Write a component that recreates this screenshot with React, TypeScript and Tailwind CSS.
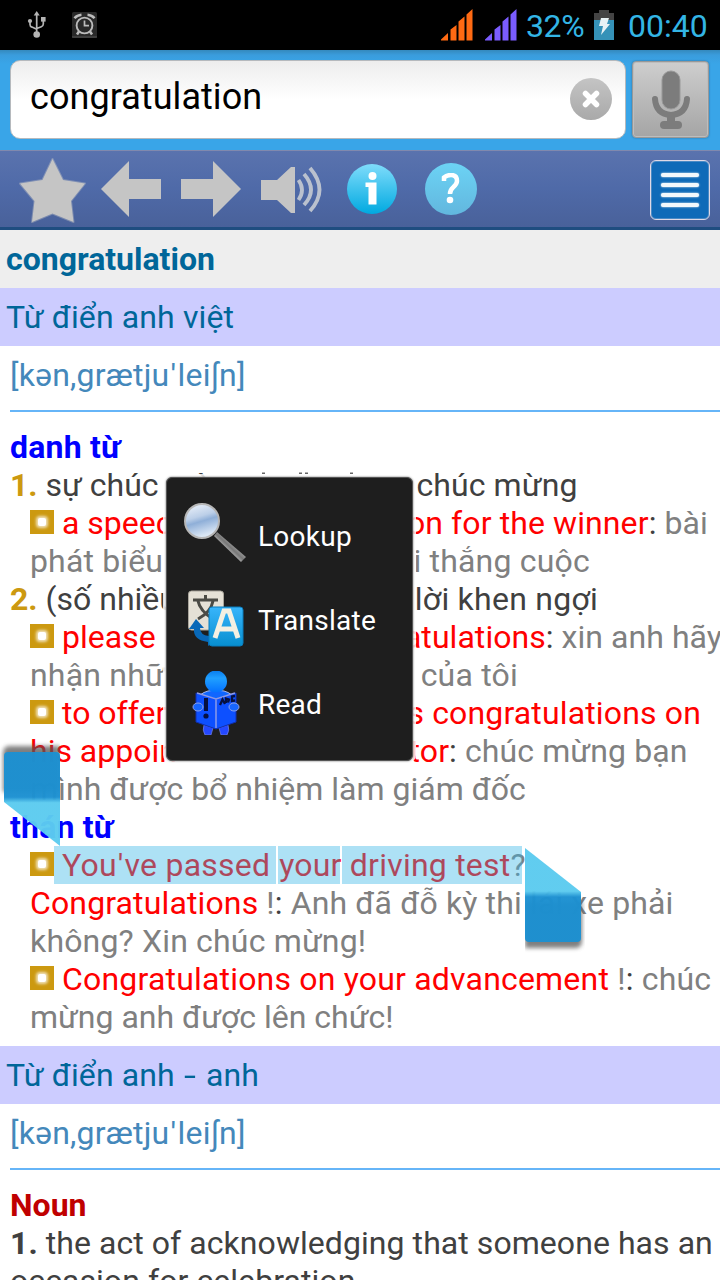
import React from "react";

const K = "text-[#404040]";
const R = "text-[#ff0000]";
const G = "text-[#808080]";

function Line({ className = "", children }: { className?: string; children: React.ReactNode }) {
  return <div className={`h-[38px] whitespace-nowrap leading-[38px] ${className}`}>{children}</div>;
}

function Bullet() {
  return (
    <span className="mr-[8px] mt-[6px] inline-flex h-6 w-6 items-center justify-center bg-[#cc9910] align-top">
      <span className="h-[8px] w-[8px] rounded-[2px] bg-white shadow-[0_0_3px_2px_rgba(255,255,255,0.7)]" />
    </span>
  );
}

function StatusBar() {
  return (
    <div className="flex h-[50px] items-center bg-black text-[32px] text-[#33b5e5]">
      <svg className="ml-[27px] h-[28px] w-[20px]" viewBox="0 0 20 28" fill="none" stroke="#b4b4b4" strokeWidth="1.7">
        <path d="M9.7 3v20M3 10v3.500q0 2 2 2.600l4.700 2.200M16.300 8v5q0 2-2 2.700l-4.600 1.800" />
        <path d="M9.700 0l3 4.500h-6z" fill="#b4b4b4" stroke="none" />
        <circle cx="9.700" cy="23.500" r="3.300" fill="#b4b4b4" stroke="none" />
        <circle cx="3" cy="10" r="2.100" fill="#b4b4b4" stroke="none" />
        <rect x="14" y="6" width="4.600" height="4.600" fill="#b4b4b4" stroke="none" />
      </svg>
      <svg className="ml-[25px] h-[26px] w-[25px]" viewBox="0 0 25 26" fill="none" stroke="#bcbcbc" strokeWidth="1.900">
        <rect x="0" y="0" width="25" height="26" rx="1.500" fill="#292929" stroke="none" />
        <path d="M0 25h25" stroke="#555" strokeWidth="1" />
        <circle cx="12.500" cy="13.500" r="7.900" />
        <path d="M12.500 8.500v5.200h4.500" strokeWidth="1.700" />
        <path d="M2.500 6.200Q5 3 9.500 2.700M22.500 6.200Q20 3 15.500 2.700" strokeWidth="2.500" />
        <path d="M7 19.500l-2 3M18 19.500l2 3" strokeWidth="2.500" />
      </svg>
      <div className="flex-1" />
      <svg className="h-[32px] w-[33px]" viewBox="0 0 33 32" fill="#ff6a13">
        <path d="M-1 31.500L7 24v7.500zM9.500 31.500V20.500l6-4.500v15.500zM17.500 31.500V12.500l6-5v24zM25.500 31.500V5.500l6-5.500v31.500z" />
      </svg>
      <svg className="ml-[11px] h-[32px] w-[33px]" viewBox="0 0 33 32" fill="#7a5cff">
        <path d="M-1 31.500L7 24v7.500zM9.500 31.500V20.500l6-4.500v15.500zM17.500 31.500V12.500l6-5v24zM25.500 31.500V5.500l6-5.500v31.500z" />
      </svg>
      <span className="ml-[8px] w-[60px] whitespace-nowrap pt-[2px] leading-[38px] tracking-[-0.4px]">32%</span>
      <svg className="ml-[8px] h-[32px] w-[20px]" viewBox="0 0 20 32">
        <path d="M0 4h5V1h10v3h5v27H0z" fill="#444" />
        <path d="M0 11h20v20H0z" fill="#3592b8" />
        <path d="M7 9h8l-2 6h3L7 26l2-9H5z" fill="#e8f2f5" />
      </svg>
      <span className="ml-[14px] w-[92px] whitespace-nowrap pt-[2px] leading-[38px]">00:40</span>
    </div>
  );
}

function SearchBar() {
  return (
    <div className="flex h-[100px] items-start bg-[linear-gradient(#3489bd_0px,#3a9cdc_5px,#39a5e8_14px,#39a5e8_100%)] pl-[10px] pt-[10px]">
      <div className="flex h-[79px] w-[616px] items-center rounded-[10px] border border-[#b5b9bd] bg-linear-to-b from-[#ededed] to-white to-50% pl-[19px] pr-[12px] text-[36px] text-black">
        <span className="flex-1 pb-[5px] leading-[42px] tracking-[0.05px]">congratulation</span>
        <svg className="mb-[2px] h-[44px] w-[44px]" viewBox="0 0 44 44">
          <defs>
            <linearGradient id="clear" x2="0" y2="1">
              <stop stopColor="#c4c4c4" />
              <stop offset="1" stopColor="#a9a9a9" />
            </linearGradient>
          </defs>
          <circle cx="22" cy="22" r="21" fill="url(#clear)" />
          <path d="M16.500 16.500l11 11M27.500 16.500l-11 11" stroke="#fff" strokeWidth="5.500" strokeLinecap="round" />
        </svg>
      </div>
      <div className="ml-[6px] mt-[1px] flex h-[77px] w-[77px] items-center justify-center rounded-[4px] border border-[#989898] bg-linear-to-b from-[#cecece] to-[#a5a5a5] shadow-[inset_0_0_0_1px_#bdbdbd,0_0_2px_#2b6c95]">
        <svg className="h-[60px] w-[40px]" viewBox="0 0 40 60">
          <rect x="11" y="1" width="18" height="38" rx="9" fill="#7c7c7c" stroke="#999" />
          <path d="M4 29q1 15 16 16q15-1 16-16" fill="none" stroke="#7c7c7c" strokeWidth="6" strokeLinecap="round" />
          <rect x="16" y="44" width="8" height="10" fill="#7c7c7c" />
          <rect x="9" y="51" width="22" height="8" rx="4" fill="#7c7c7c" />
        </svg>
      </div>
    </div>
  );
}

function Toolbar() {
  return (
    <div className="flex h-[80px] items-start border-b-[3px] border-[#1f4d80] bg-linear-to-b from-[#5a73ae] via-[#4f6aa8] to-[#49619a] shadow-[inset_0_1px_0_#8089ae]">
      <svg className="ml-[18px] mt-[6px] h-[70px] w-[70px]" viewBox="0 0 70 70">
        <path d="M34.500 3L45 24L67 27.500L53 45L55.500 66L34.500 57.500L14 66L16.500 45L2 27.500L24.500 24z" fill="#c5c5c5" stroke="#c5c5c5" strokeOpacity=".4" strokeWidth="2" strokeLinejoin="round" />
      </svg>
      <svg className="ml-[13px] mt-[11px] h-[56px] w-[60px]" viewBox="0 0 60 56">
        <path d="M0 28L28 0v18h32v20H28v18z" fill="#c5c5c5" />
      </svg>
      <svg className="ml-[20px] mt-[11px] h-[56px] w-[60px]" viewBox="0 0 60 56">
        <path d="M60 28L32 0v18H0v20h32v18z" fill="#c5c5c5" />
      </svg>
      <svg className="ml-[20px] mt-[16px] h-[48px] w-[62px]" viewBox="0 0 62 48" fill="none" stroke="#bac1ce" strokeWidth="3.800">
        <path d="M0 14h16L30 1h4v46h-4L16 34H0z" fill="#c5c5c5" stroke="none" />
        <path d="M37.500 14q7 10 0 20M43 8q14 16 0 31M49 2q19 22 0 43" />
      </svg>
      <svg className="ml-[23px] mt-[12px] h-[52px] w-[52px]" viewBox="0 0 52 52">
        <defs>
          <linearGradient id="info" x2="0" y2="1">
            <stop stopColor="#7fdcfb" />
            <stop offset="1" stopColor="#00a9e0" />
          </linearGradient>
        </defs>
        <circle cx="26" cy="27" r="25" fill="url(#info)" />
        <circle cx="26.500" cy="14" r="4" fill="#fff" />
        <path d="M19.500 20.500h11v22h-8V25h-3z" fill="#fff" />
      </svg>
      <div className="ml-[27px] mt-[13px] flex h-[52px] w-[52px] items-center justify-center rounded-full bg-linear-to-b from-[#6cd3f5] to-[#62b7de]">
        <svg className="h-[32px] w-[20px]" viewBox="0 0 20 32">
          <path d="M3 8V4.500q3-2.500 7-2.500q6 0 6 6q0 3-4 6.500q-3 2.500-3 6.500" fill="none" stroke="#fff" strokeWidth="4.500" />
          <circle cx="9" cy="27" r="3.300" fill="#fff" />
        </svg>
      </div>
      <div className="flex-1" />
      <div className="mr-[10px] mt-[10px] flex h-[60px] w-[60px] flex-col items-center justify-center gap-[6px] rounded-[6px] border border-[#dfd9e6] bg-[#0f6ab8] shadow-[inset_0_0_0_1px_#4a8ac5]">
        {[0, 1, 2, 3].map((i) => (
          <div key={i} className="h-[4px] w-[38px] rounded-[2px] bg-[#f4f8fc] shadow-[0_0_2px_#fff]" />
        ))}
      </div>
    </div>
  );
}

function SectionTitle({ children }: { children: React.ReactNode }) {
  return <div className="h-[58px] bg-[#ccccff] pl-[6px] leading-[58px] tracking-[0.12px] text-[#006699]">{children}</div>;
}

function Phonetic() {
  return (
    <div className="pl-[10px]">
      <div className="h-[58px] leading-[58px] tracking-[0.2px] text-[#4488bb]">
        [kən,grætju<span className="px-[1.2px]">&apos;</span>leiʃn]
      </div>
      <div className="mb-[16px] mt-[6px] h-[2px] bg-[#66b5f8]" />
    </div>
  );
}

function MagnifierIcon() {
  return (
    <svg className="mt-[3px] h-[62px] w-[62px]" viewBox="0 0 62 62">
      <defs>
        <linearGradient id="lens" x2=".3" y2="1">
          <stop stopColor="#f2f6fc" />
          <stop offset=".45" stopColor="#bccfe8" />
          <stop offset=".6" stopColor="#8fafd8" />
          <stop offset="1" stopColor="#dbe7f5" />
        </linearGradient>
        <linearGradient id="handle" x1="0" y1="1" x2="1" y2="0">
          <stop offset=".35" stopColor="#ccc" />
          <stop offset=".5" stopColor="#777" />
          <stop offset=".65" stopColor="#aaa" />
        </linearGradient>
      </defs>
      <path d="M30 33l3-4L62 54l-5 5z" fill="url(#handle)" />
      <circle cx="18" cy="18" r="17" fill="url(#lens)" stroke="#b7b7b7" strokeWidth="2" />
    </svg>
  );
}

function TranslateIcon() {
  return (
    <svg className="mt-[4px] h-[60px] w-[62px]" viewBox="0 0 62 60">
      <defs>
        <linearGradient id="tile" x2="0" y2="1">
          <stop stopColor="#38b5fb" />
          <stop offset="1" stopColor="#078fd0" />
        </linearGradient>
      </defs>
      <rect x="4.500" y="3" width="35" height="39" rx="3" fill="#e5e1d6" stroke="#aaa69c" />
      <path d="M9 12h25M21.500 7v5M14 13q2 10 15 18M29 13q-2 11-15 18" fill="none" stroke="#4b4b45" strokeWidth="3" />
      <path d="M5 41l7-10l8 9h-4q0 7 9 8v-4l7 8l-8 6v-4Q9 52 10 41z" fill="#0868b8" />
      <rect x="25" y="19" width="34" height="39" rx="3" fill="url(#tile)" stroke="#087cbd" />
      <path d="M31 50l9-27h5l9 27M34.500 41h17" fill="none" stroke="#f4f0e2" strokeWidth="5" />
    </svg>
  );
}

function ReaderIcon() {
  return (
    <svg className="mt-[6px] h-[64px] w-[62px]" viewBox="0 0 62 64">
      <defs>
        <linearGradient id="head" x2="0" y2="1">
          <stop stopColor="#087cee" />
          <stop offset=".35" stopColor="#20a0ff" />
          <stop offset="1" stopColor="#0470ff" />
        </linearGradient>
      </defs>
      <path d="M20 54l9 3l-2 7h-6q-3-5-1-10zM44 54l-9 3l2 7h6q3-5 1-10z" fill="#2448ff" stroke="#7585df" strokeWidth=".7" />
      <path d="M16 24q8-6 16-4q8-2 16 4v10H16z" fill="#1066ff" stroke="#aab8ef" />
      <path d="M12 22l20 6l20-6v29l-20 7l-20-7z" fill="#0d50ff" stroke="#102eb0" />
      <path d="M32 28v29M13 22l19 6l19-6" fill="none" stroke="#8c9ae8" strokeWidth="1.500" />
      <path d="M22 27v13" stroke="#061040" strokeWidth="4" />
      <circle cx="22" cy="45" r="2.600" fill="#061040" />
      <path d="M36 34l2.500-5.500l2.500 4.500M42 32v-4.500l3 1l-1 3M51 25l-3 .5v4.500l3-.5" fill="none" stroke="#061040" strokeWidth="2.300" />
      <ellipse cx="14" cy="36" rx="5" ry="4" fill="#1766ff" stroke="#8da0e8" />
      <ellipse cx="50" cy="36" rx="5" ry="4" fill="#1766ff" stroke="#8da0e8" />
      <circle cx="32" cy="10.500" r="11" fill="url(#head)" />
    </svg>
  );
}

function Popup() {
  const items = [
    { label: "Lookup", icon: <MagnifierIcon /> },
    { label: "Translate", icon: <TranslateIcon /> },
    { label: "Read", icon: <ReaderIcon /> },
  ];
  return (
    <div className="absolute left-[166px] top-[477px] flex h-[284px] w-[247px] flex-col rounded-[6px] border border-[#555] bg-[#1e1e1e] pl-[17px] pt-[12px] text-[28px] text-white shadow-[0_0_2px_#555,0_0_0_3px_rgba(255,255,255,0.85)]">
      <svg className="absolute left-[90px] top-[-6px] h-[2px] w-[100px]" viewBox="0 0 100 2" fill="#666">
        <path d="M5 .5h3v1.500h-3zM42 .5h3v1.500h-3zM48 .5h3v1.500h-3zM93 .5h3v1.500h-3z" />
      </svg>
      {items.map((item) => (
        <div key={item.label} className="flex h-[84px] items-center">
          {item.icon}
          <span className="ml-[12px] pt-[10px] leading-[34px] tracking-[0.25px]">{item.label}</span>
        </div>
      ))}
    </div>
  );
}

function Handle({ id }: { id: string }) {
  return (
    <svg className="block h-[106px] w-[60px]" viewBox="0 0 60 106">
      <defs>
        <linearGradient id={id} x2="0" y2="1">
          <stop stopColor="#5ccbef" />
          <stop offset=".46" stopColor="#5ccbef" />
          <stop offset=".52" stopColor="#1c90d1" />
          <stop offset="1" stopColor="#1c90d1" />
        </linearGradient>
        <filter id={`${id}s`} x="-20%" y="-20%" width="140%" height="140%">
          <feGaussianBlur stdDeviation="2" />
        </filter>
      </defs>
      <path d="M0 55h57v38q0 8-6 8H0z" fill="#555" opacity=".75" filter={`url(#${id}s)`} />
      <path d="M0 1L56 45v46q0 4-4 4H4q-4 0-4-4z" fill={`url(#${id})`} opacity=".97" />
    </svg>
  );
}

export default function App() {
  return (
    <div className="relative h-[1280px] w-[720px] overflow-hidden bg-white font-['Roboto','Noto_Sans',sans-serif] text-[32px]">
      <StatusBar />
      <SearchBar />
      <Toolbar />
      <div className="h-[58px] bg-[#eeeeee] pl-[6px] font-bold leading-[58px] text-[#006699]">congratulation</div>
      <SectionTitle>Từ điển anh việt</SectionTitle>
      <Phonetic />
      <div className="mb-[10px] pl-[10px]">
        <Line className="font-bold tracking-[0.2px] text-[#0000ff]">danh từ</Line>
        <Line className={`flex w-[567.5px] justify-between ${K}`}>
          <span><b className="text-[#cc9910]">1.</b> sự chúc mừng</span>
          <span className="tracking-[0.1px]">chúc mừng</span>
        </Line>
        <div className="pl-[20px]">
          <Line className={`flex w-[678px] justify-between ${G}`}>
            <span><Bullet /><span className={R}>a speec</span></span>
            <span className="tracking-[0.1px]"><span className={R}>on for the winner</span><span className={K}>:</span> bài</span>
          </Line>
          <Line className={`flex w-[560px] justify-between ${G}`}>
            <span className="tracking-[0.15px]">phát biểu</span>
            <span className="tracking-[0.2px]">i thắng cuộc</span>
          </Line>
        </div>
        <Line className={`flex w-[588px] justify-between ${K}`}>
          <span><b className="text-[#cc9910]">2.</b> (số nhiều</span>
          <span className="tracking-[0.25px]">lời khen ngợi</span>
        </Line>
        <div className="pl-[20px]">
          <Line className={`flex w-[692px] justify-between ${G}`}>
            <span><Bullet /><span className={R}>please</span></span>
            <span className="tracking-[0.05px]"><span className={R}>atulations</span><span className={K}>:</span> xin anh hãy</span>
          </Line>
          <Line className={`flex w-[488px] justify-between ${G}`}>
            <span className="tracking-[0.2px]">nhận nhữ</span>
            <span className="tracking-[0.2px]">của tôi</span>
          </Line>
          <Line className={`flex w-[671px] justify-between ${R}`}>
            <span><Bullet />to offer</span>
            <span className="tracking-[0.15px]">s congratulations on</span>
          </Line>
          <Line className={`flex w-[657.5px] justify-between ${G}`}>
            <span className={R}>his appoin</span>
            <span className="tracking-[0.1px]"><span className={R}>tor</span><span className={K}>:</span> chúc mừng bạn</span>
          </Line>
          <Line className={G}>mình được bổ nhiệm làm giám đốc</Line>
        </div>
        <Line className="font-bold tracking-[0.2px] text-[#0000ff]">thán từ</Line>
        <div className="pl-[20px]">
          <Line className={`relative tracking-[0.22px] ${G}`}>
            <Bullet /><span className={R}>You<span className="px-[1px]">&apos;</span>ve passed <span className="ml-[0.8px]">your</span> driving test</span>?
            <span className="absolute left-[24px] top-0 flex h-[38px] w-[468px] gap-[2px]">
              <span className="w-[222px] bg-[#33b5e5]/40" />
              <span className="w-[62px] bg-[#33b5e5]/40" />
              <span className="flex-1 bg-[#33b5e5]/40" />
            </span>
          </Line>
          <Line className={`tracking-[0.13px] ${G}`}><span className={R}>Congratulations</span> !<span className={K}>:</span> Anh đã đỗ kỳ thi lái xe phải</Line>
          <Line className={`tracking-[0.17px] ${G}`}>không? Xin chúc mừng!</Line>
          <Line className={`tracking-[0.19px] ${G}`}><Bullet /><span className={R}>Congratulations on your advancement</span> !<span className={K}>:</span> chúc</Line>
          <Line className={G}>mừng anh được lên chức!</Line>
        </div>
      </div>
      <SectionTitle>Từ điển anh <span className="ml-px inline-block origin-left scale-x-[1.35] pr-[5px]">-</span> anh</SectionTitle>
      <Phonetic />
      <div className="pl-[10px]">
        <Line className="font-bold text-[#c00000]">Noun</Line>
        <Line className={`tracking-[0.06px] ${K}`}><b>1.</b> the act of acknowledging that someone has an</Line>
        <Line className={`tracking-[0.07px] ${K}`}>occasion for celebration</Line>
      </div>
      <div className="absolute left-0 top-[741px] rotate-180"><Handle id="start" /></div>
      <div className="absolute left-[525px] top-[847px]"><Handle id="end" /></div>
      <Popup />
    </div>
  );
}
